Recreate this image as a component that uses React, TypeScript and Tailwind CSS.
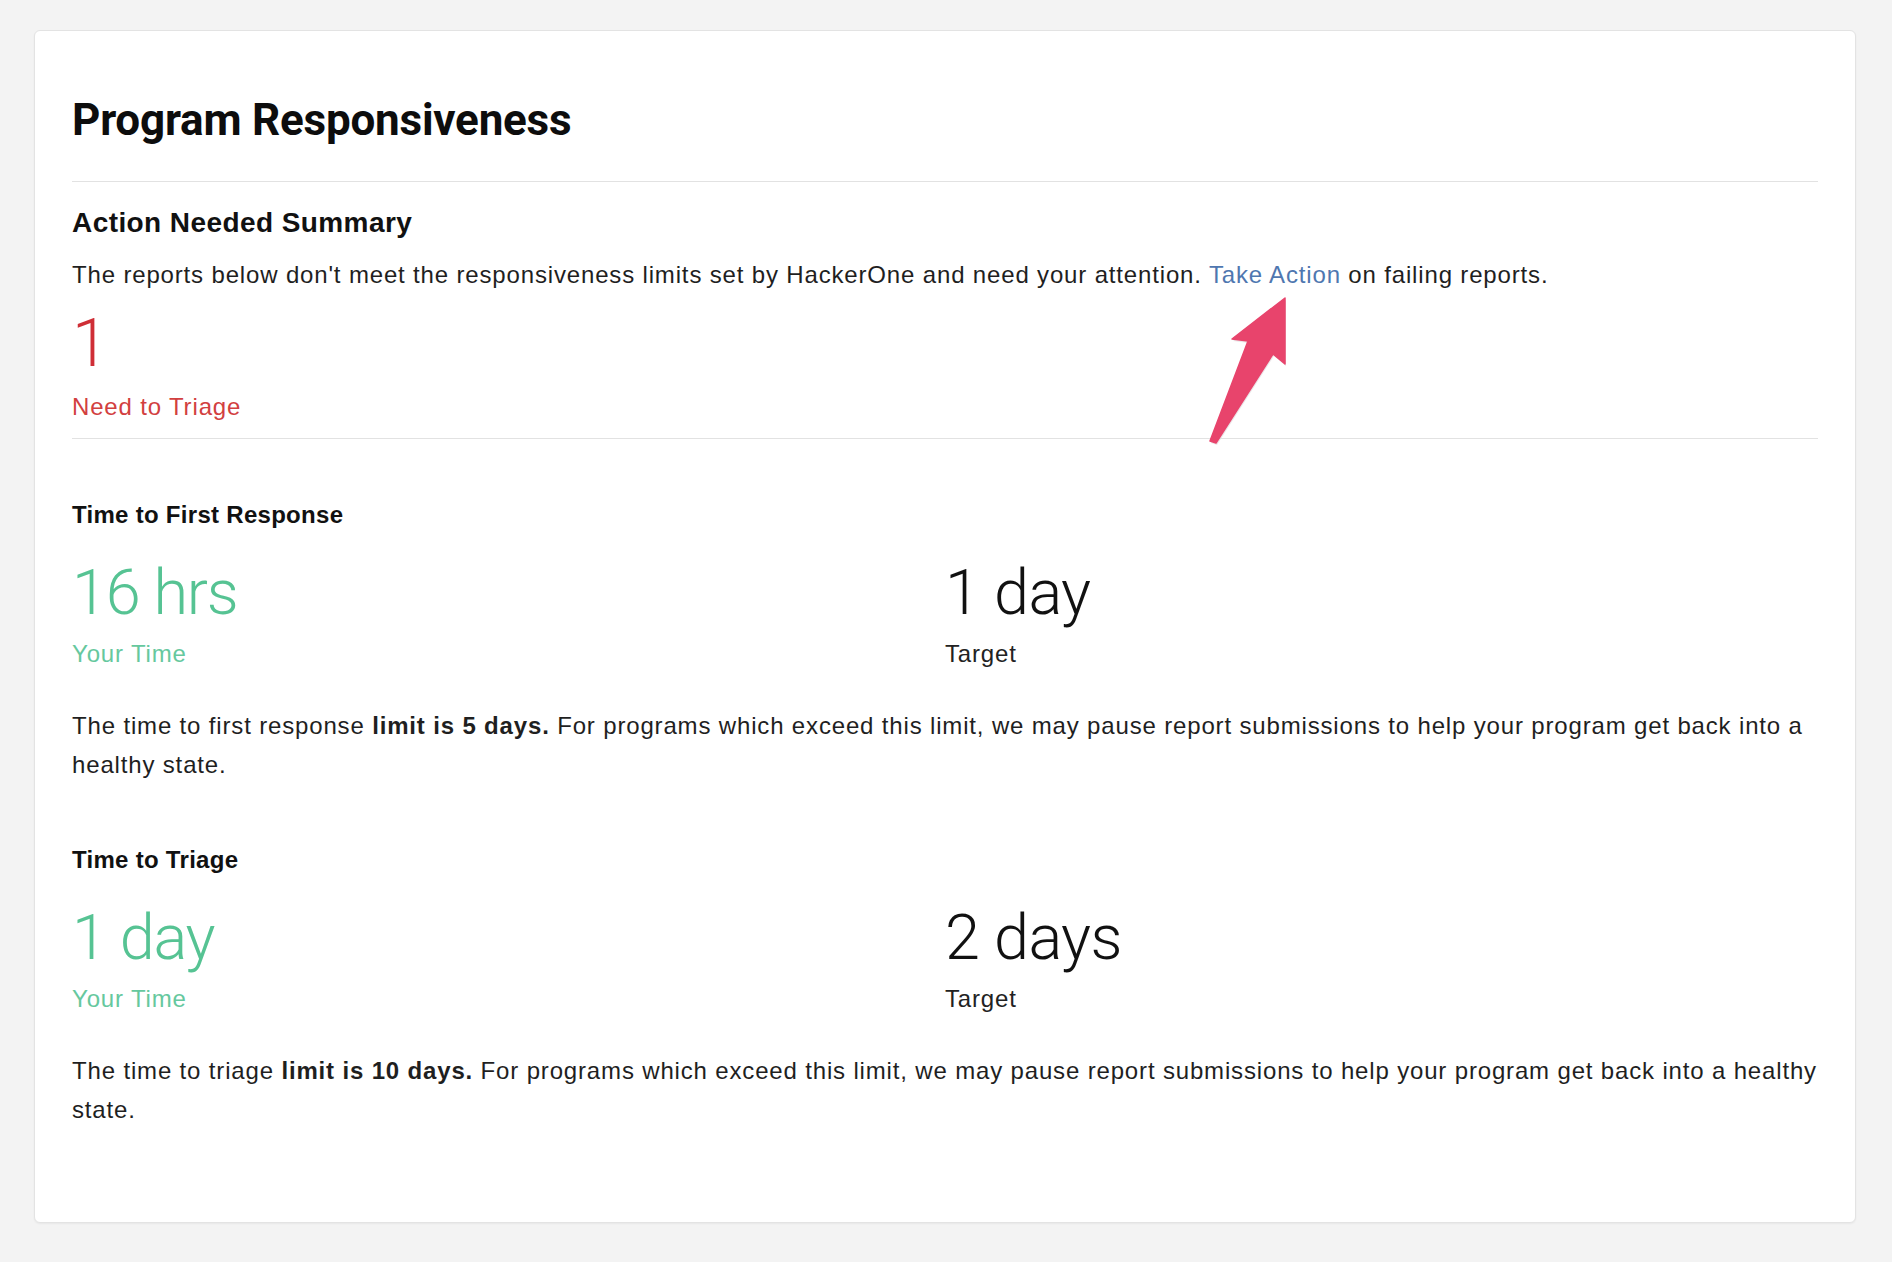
import React from 'react'

interface Metric {
  title: string
  yours: string
  target: string
  limit: string
  rest: string
}

const metrics: Metric[] = [
  {
    title: 'Time to First Response',
    yours: '16 hrs',
    target: '1 day',
    limit: 'limit is 5 days.',
    rest: 'The time to first response',
  },
  {
    title: 'Time to Triage',
    yours: '1 day',
    target: '2 days',
    limit: 'limit is 10 days.',
    rest: 'The time to triage',
  },
]

function PointerArrow() {
  // annotation arrow drawn over the card, pointing at "Take Action"
  return (
    <svg
      className="absolute left-[1166px] top-[260px] pointer-events-none"
      width="100"
      height="160"
      viewBox="0 0 100 160"
    >
      <polygon
        points="84,7 84,73 72,63 15,152 9,150 47,50 31,48"
        fill="#dcd6d8"
        transform="translate(1,2)"
        opacity="0.6"
      />
      <polygon
        points="84,7 84,73 72,63 15,152 9,150 47,50 31,48"
        fill="#e8446c"
        strokeLinejoin="round"
        stroke="#e8446c"
        strokeWidth="1.5"
      />
    </svg>
  )
}

function MetricBlock({ m }: { m: Metric }) {
  return (
    <div className="mt-[60px]">
      <h3 className="text-[24px] leading-[32px] font-bold text-[#111] tracking-[0.012em]">{m.title}</h3>
      <div className="grid grid-cols-2 mt-[30px]">
        <div>
          <div className="font-['Roboto',_sans-serif] text-[63px] leading-none font-light text-[#56c393] tracking-[-0.02em]">
            {m.yours}
          </div>
          <div className="mt-[14px] text-[24px] leading-[32px] tracking-[0.035em] text-[#66c89e]">Your Time</div>
        </div>
        <div>
          <div className="font-['Roboto',_sans-serif] text-[63px] leading-none font-light text-[#111] tracking-[-0.01em]">
            {m.target}
          </div>
          <div className="mt-[14px] text-[24px] leading-[32px] tracking-[0.035em] text-[#222]">Target</div>
        </div>
      </div>
      <p className="mt-[36px] text-[24px] leading-[39px] tracking-[0.035em] text-[#1f1f1f]">
        {m.rest} <b className="font-bold">{m.limit}</b> For programs which exceed this limit, we may pause report
        submissions to help your program get back into a healthy state.
      </p>
    </div>
  )
}

export default function App() {
  return (
    <div className="min-h-[1262px] bg-[#f3f3f3] pl-[34px] pr-[36px] pt-[30px] pb-[41px] font-['Liberation_Sans',_Arial,_sans-serif]">
      <div className="relative bg-white border border-[#e3e3e3] rounded-[6px] shadow-[0_1px_2px_rgba(0,0,0,0.05)] px-[37px] pt-[63px] pb-[93px]">
        <h1 className="font-['Roboto',_sans-serif] text-[44px] leading-[53px] font-bold text-[#0d0d0d] tracking-[-0.005em]">
          Program Responsiveness
        </h1>
        <div className="mt-[34px] h-px bg-[#e2e2e2]" />

        <h2 className="mt-[24px] text-[28px] leading-[34px] font-bold text-[#111] tracking-[0.015em]">
          Action Needed Summary
        </h2>
        <p className="mt-[18px] text-[24px] leading-[34px] tracking-[0.035em] text-[#1f1f1f]">
          The reports below don't meet the responsiveness limits set by HackerOne and need your attention.{' '}
          <a href="#" className="text-[#4f77b0]">Take Action</a> on failing reports.
        </p>
        <div className="mt-[19px] font-['Roboto',_sans-serif] text-[66px] leading-none font-light text-[#cf2e36]">1</div>
        <div className="mt-[14px] text-[24px] leading-[32px] tracking-[0.035em] text-[#d2403f]">Need to Triage</div>
        <div className="mt-[15px] h-px bg-[#e2e2e2]" />

        {metrics.map((m) => (
          <MetricBlock key={m.title} m={m} />
        ))}

        <PointerArrow />
      </div>
    </div>
  )
}
